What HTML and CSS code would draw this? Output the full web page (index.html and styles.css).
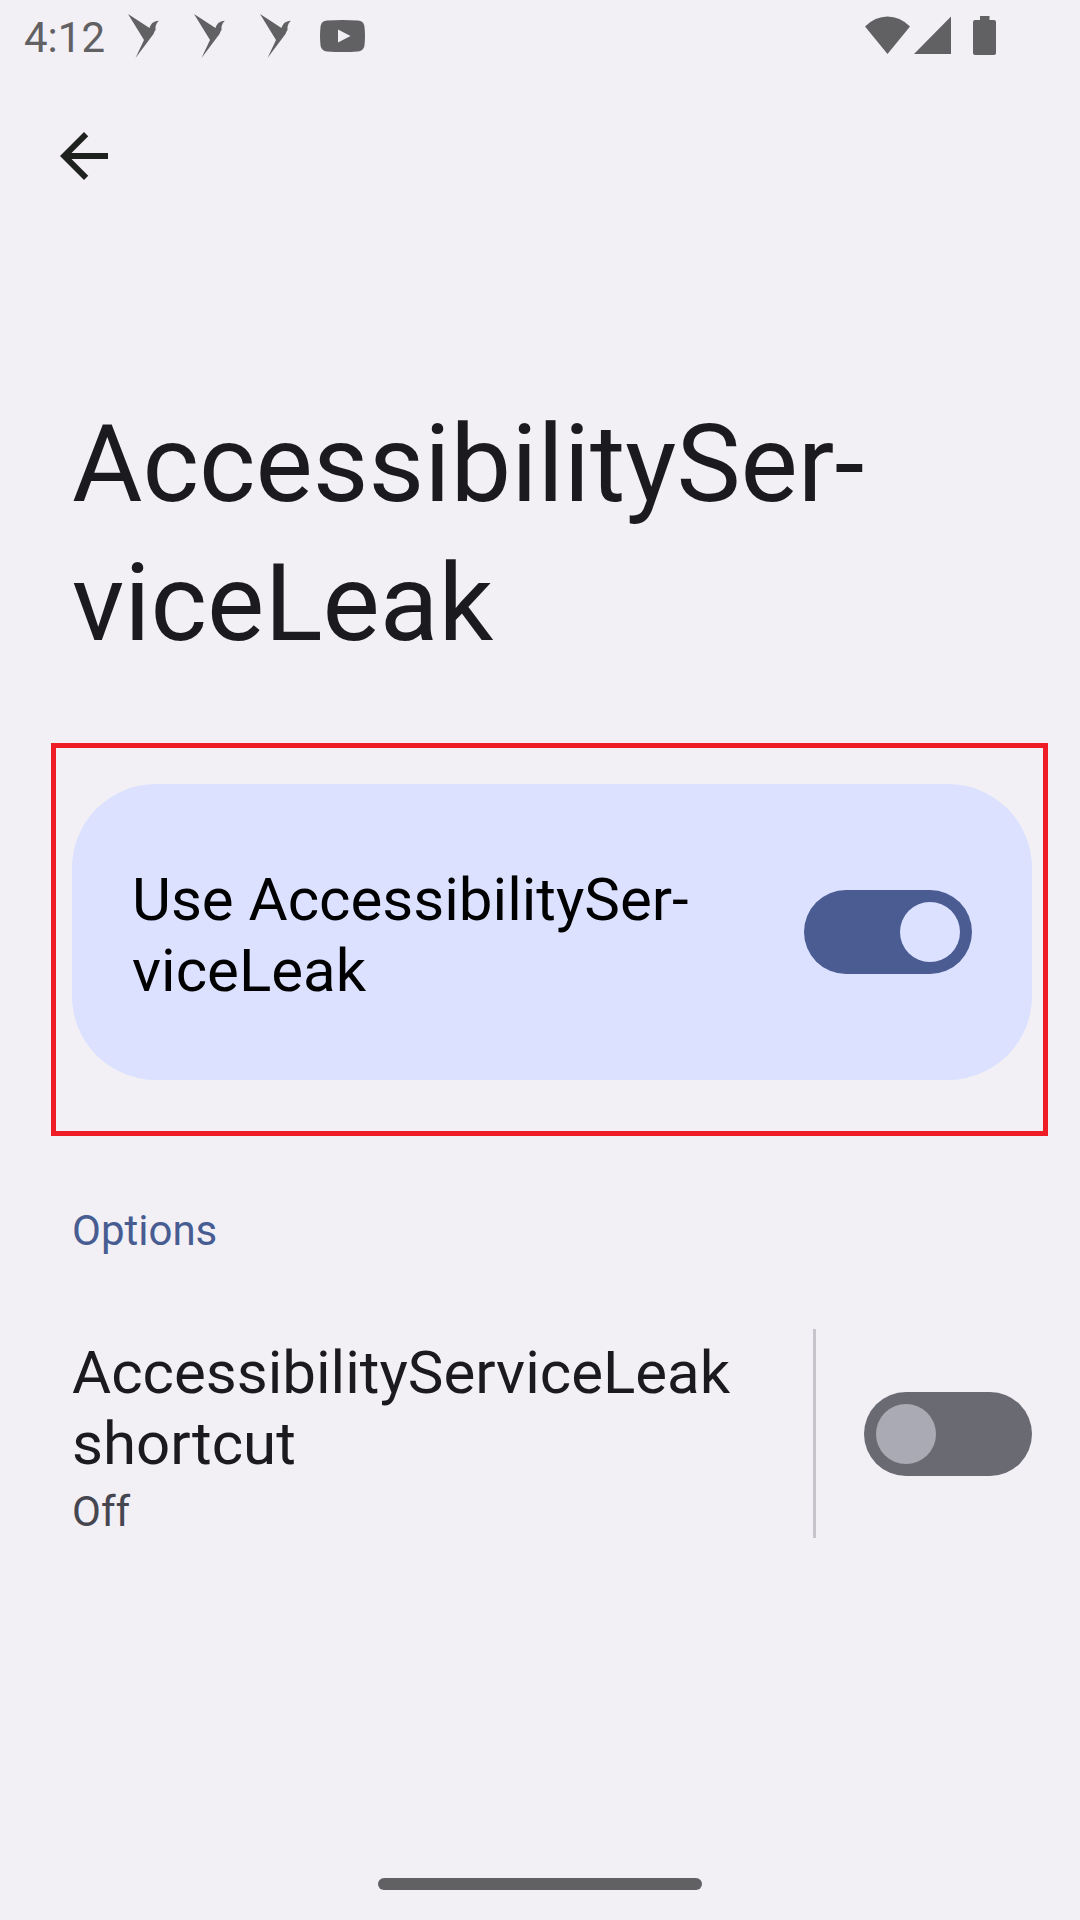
FILE: index.html
```html
<!DOCTYPE html>
<html lang="en">
<head>
<meta charset="utf-8">
<meta name="viewport" content="width=device-width, initial-scale=1">
<title>AccessibilityServiceLeak</title>
<link rel="stylesheet" href="styles.css">
</head>
<body>
<svg class="sprite" aria-hidden="true">
  <symbol id="bird" viewBox="0 0 32 45"><path d="M0 0L21.500 14C22.500 10.500 25 7 31 6.800C29 8.500 28 10.500 27.500 13V16L26.500 17.500L25.500 20L7.500 44L16 26Z"/></symbol>
</svg>
<header class="status-bar">
  <div class="status-left">
    <time class="clock">4:12</time>
    <div class="notifications">
      <svg class="bird" aria-hidden="true"><use href="#bird"/></svg>
      <svg class="bird" aria-hidden="true"><use href="#bird"/></svg>
      <svg class="bird" aria-hidden="true"><use href="#bird"/></svg>
    </div>
    <svg class="video" viewBox="0 0 45 32" aria-hidden="true"><path fill-rule="evenodd" d="M7 .6Q22.500-.6 38 .6Q43.500 1 44.400 6Q45.600 16 44.400 26Q43.500 31 38 31.400Q22.500 32.600 7 31.400Q1.500 31 .6 26Q-.6 16 .6 6Q1.500 1 7 .6ZM18 9.500V22.500L30.500 16Z"/></svg>
  </div>
  <div class="status-right">
    <svg class="wifi" viewBox="0 0 45 38" aria-hidden="true"><path d="M0 10.500Q10 .5 22.500 .5T45 10.500L22.500 38Z"/></svg>
    <svg class="signal" viewBox="0 0 37 38" aria-hidden="true"><path d="M37 .5V38H0Z"/></svg>
    <svg class="battery" viewBox="0 0 23 39" aria-hidden="true"><path d="M7 0H16.500V4H21Q23 4 23 6V37Q23 39 21 39H2Q0 39 0 37V6Q0 4 2 4H7Z"/></svg>
  </div>
</header>
<main class="content">
  <button class="back" type="button" aria-label="Navigate up">
    <svg viewBox="0 0 24 24" aria-hidden="true"><path d="M20 11H7.830l5.590-5.590L12 4l-8 8 8 8 1.410-1.410L7.830 13H20z"/></svg>
  </button>
  <h1 class="title">AccessibilitySer-<br>viceLeak</h1>
  <section class="highlight">
    <div class="card">
      <label class="label" for="use-service">Use AccessibilitySer-<br>viceLeak</label>
      <input class="switch" id="use-service" type="checkbox" role="switch" checked>
    </div>
  </section>
  <section class="options">
    <h2 class="caption">Options</h2>
    <div class="row">
      <div class="row-text">
        <label class="label" for="shortcut">AccessibilityServiceLeak shortcut</label>
        <span class="summary">Off</span>
      </div>
      <div class="row-control">
        <input class="switch" id="shortcut" type="checkbox" role="switch">
      </div>
    </div>
  </section>
</main>
<footer class="nav-bar"><div class="handle"></div></footer>
</body>
</html>
```
FILE: styles.css
```css
* { box-sizing: border-box; }

body {
  margin: 0;
  min-height: 100vh;
  display: flex;
  flex-direction: column;
  background: #f2eff5;
  color: #1b1b1f;
  font-family: Roboto, "Liberation Sans", sans-serif;
}

svg { display: block; }

.sprite { position: absolute; width: 0; height: 0; }

.status-bar {
  display: flex;
  justify-content: space-between;
  height: 72px;
  padding: 0 84px 0 24px;
  color: #616163;
}

.status-bar svg { fill: currentColor; }

.status-left { display: flex; }

.clock { padding-top: 13px; font-size: 42px; line-height: 50px; }

.notifications { display: flex; gap: 34px; margin: 14px 28px 0 23px; }

.bird { width: 32px; height: 45px; }

.video { width: 45px; height: 32px; margin-top: 20px; }

.status-right { display: flex; align-items: flex-start; padding-top: 16px; }

.wifi { width: 45px; height: 38px; }

.signal { width: 37px; height: 38px; margin: 0 22px 0 4px; }

.battery { width: 23px; height: 39px; }

.content { flex: 1; }

.back {
  display: block;
  width: 72px;
  height: 72px;
  margin: 48px 0 0 48px;
  padding: 0;
  border: 0;
  background: none;
}

.back svg { width: 72px; height: 72px; fill: #1f211f; }

.title {
  margin: 203px 48px 70px 72px;
  font-size: 108px;
  font-weight: 400;
  line-height: 139px;
}

.highlight {
  margin: 0 32px 0 51px;
  padding: 36px 11px 51px 16px;
  border: 5px solid #ee1c24;
  background: #f2f0f4;
}

.card {
  display: flex;
  align-items: center;
  justify-content: space-between;
  min-height: 296px;
  padding: 0 60px;
  border-radius: 84px;
  background: #dbe1ff;
  color: #000;
}

.label { display: block; font-size: 60px; line-height: 71px; }

.card .label { padding-top: 6px; }

.switch {
  appearance: none;
  flex: none;
  display: flex;
  width: 168px;
  height: 84px;
  margin: 0;
  padding: 12px;
  border-radius: 42px;
  background: #6a6a73;
}

.switch::before {
  content: "";
  width: 60px;
  height: 60px;
  border-radius: 50%;
  background: #aaaab4;
}

.switch:checked { justify-content: flex-end; background: #4a5c92; }

.switch:checked::before { background: #dbe1ff; }

.options { padding: 70px 48px 0 72px; }

.caption {
  margin: 0 0 73px;
  color: #475d92;
  font-size: 42px;
  font-weight: 400;
  line-height: 50px;
}

.row { display: flex; justify-content: space-between; }

.row-text { flex: 1; padding: 8px 48px 1px 0; }

.summary {
  display: block;
  margin-top: 8px;
  color: #45464f;
  font-size: 42px;
  line-height: 50px;
}

.row-control {
  display: flex;
  align-items: center;
  padding-left: 48px;
  border-left: 3px solid #c6c5cb;
}

.nav-bar { display: flex; justify-content: center; padding-bottom: 30px; }

.handle { width: 30%; height: 12px; border-radius: 6px; background: #616163; }
```
